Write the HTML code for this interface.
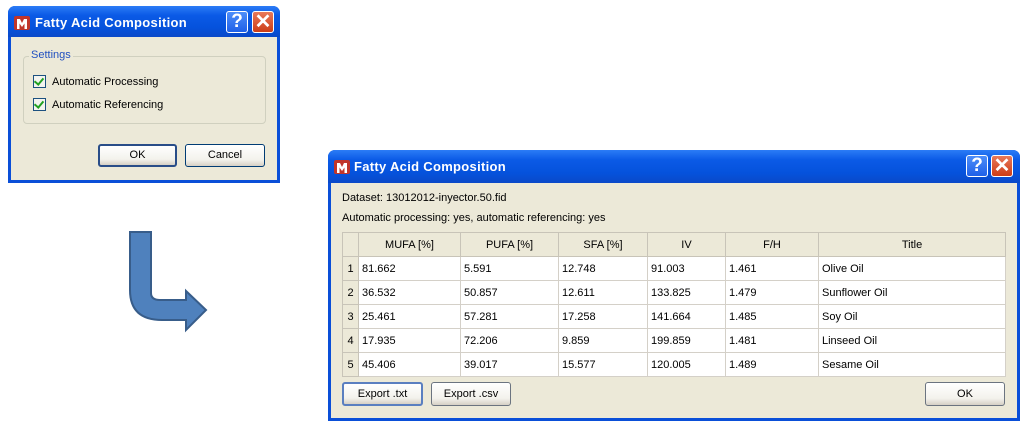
<!DOCTYPE html>
<html><head><style>
*{margin:0;padding:0;box-sizing:border-box}
body{width:1024px;height:429px;background:#fff;position:relative;overflow:hidden;font-family:"Liberation Sans",sans-serif;font-size:11px;color:#000}
.abs{position:absolute}
.win{position:absolute;background:#0a4fd8;border-radius:7px 7px 0 0}
.tb{position:absolute;left:0;right:0;top:0;background:linear-gradient(#2b7cf6,#0b5ae6 30%,#0552dc 70%,#0a49c8);border-radius:7px 7px 0 0}
.title{position:absolute;color:#fff;font-weight:bold;font-size:13px;letter-spacing:0.3px}
.body{position:absolute;background:#ece9d8}
.ico{position:absolute;width:16px;height:14px;background:#c0352a;border-radius:2px}
.ico:after{content:"";position:absolute;left:3px;top:3px;width:10px;height:10px;background:#fff;clip-path:polygon(0 100%,0 0,30% 0,50% 40%,70% 0,100% 0,100% 100%,75% 100%,75% 45%,50% 80%,25% 45%,25% 100%)}
.hb,.cb{position:absolute;width:22px;height:22px;border:1px solid #fff;border-radius:3px;color:#fff;font-weight:bold;text-align:center}
.hb{background:linear-gradient(#4d8ef9,#1f60e8);font-size:19px;line-height:20px}
.cb{background:linear-gradient(#e9795a,#cc3c16);font-size:20px;line-height:20px}
.btn{position:absolute;border:1px solid #003c74;border-radius:3px;background:linear-gradient(#fff,#f3f2ec 70%,#d6d0c5);text-align:center;font-size:11px}
.chk{position:absolute;width:13px;height:13px;border:1px solid #1c5180;background:#f4f4ef}
.chk:after{content:"";position:absolute;left:2px;top:0px;width:4px;height:7px;border:solid #21a121;border-width:0 2px 2px 0;transform:rotate(40deg)}
table{border-collapse:collapse;position:absolute;left:342px;top:232px;width:664px;font-size:11px}
td{border:1px solid #d4d0c8;height:24px;padding-left:3px;background:#fff}
tr.h td{background:#ece9d8;text-align:center;padding:0;height:24px;border-color:#c8c4b8}
td.n{background:#ece9d8;width:16px;padding:0;text-align:center;border-color:#c8c4b8}
</style></head><body>

<div class="win" style="left:8px;top:6px;width:272px;height:177px">
 <div class="tb" style="height:31px"></div>
 <div class="ico" style="left:6px;top:10px"></div>
 <div class="title" style="left:27px;top:9px">Fatty Acid Composition</div>
 <div class="hb" style="left:218px;top:5px">?</div>
 <div class="cb" style="left:244px;top:5px">✕</div>
 <div class="body" style="left:3px;top:31px;width:266px;height:143px"></div>
</div>
<div class="abs" style="left:23px;top:56px;width:243px;height:68px;border:1px solid #d0d0bf;border-radius:4px"></div>
<div class="abs" style="left:29px;top:49px;background:#ece9d8;padding:0 2px;color:#2150c0">Settings</div>
<div class="chk" style="left:33px;top:75px"></div>
<div class="abs" style="left:52px;top:76px">Automatic Processing</div>
<div class="chk" style="left:33px;top:98px"></div>
<div class="abs" style="left:52px;top:99px">Automatic Referencing</div>
<div class="btn" style="left:98px;top:144px;width:79px;height:23px;line-height:19px;border-width:2px;border-color:#294d88">OK</div>
<div class="btn" style="left:185px;top:144px;width:80px;height:23px;line-height:21px"><span style="display:block;height:21px;line-height:21px">Cancel</span></div>

<svg class="abs" style="left:0;top:0" width="1024" height="429">
 <path d="M130 232 H151 V293 Q151 300 160 300 H186 V291 L206 310 L186 330 V320 H162 Q130 320 130 290 Z" fill="#4f81bd" stroke="#385d8a" stroke-width="2"/>
</svg>

<div class="win" style="left:328px;top:150px;width:692px;height:271px">
 <div class="tb" style="height:33px"></div>
 <div class="ico" style="left:6px;top:10px"></div>
 <div class="title" style="left:26px;top:9px">Fatty Acid Composition</div>
 <div class="hb" style="left:638px;top:5px">?</div>
 <div class="cb" style="left:663px;top:5px">✕</div>
 <div class="body" style="left:3px;top:33px;width:686px;height:235px"></div>
</div>
<div class="abs" style="left:342px;top:192px">Dataset: 13012012-inyector.50.fid</div>
<div class="abs" style="left:342px;top:212px">Automatic processing: yes, automatic referencing: yes</div>
<table>
<tr class="h"><td class="n"></td><td style="width:102px">MUFA [%]</td><td style="width:98px">PUFA [%]</td><td style="width:89px">SFA [%]</td><td style="width:78px">IV</td><td style="width:93px">F/H</td><td>Title</td></tr>
<tr><td class="n">1</td><td style="border:1px dotted #777">81.662</td><td>5.591</td><td>12.748</td><td>91.003</td><td>1.461</td><td>Olive Oil</td></tr>
<tr><td class="n">2</td><td>36.532</td><td>50.857</td><td>12.611</td><td>133.825</td><td>1.479</td><td>Sunflower Oil</td></tr>
<tr><td class="n">3</td><td>25.461</td><td>57.281</td><td>17.258</td><td>141.664</td><td>1.485</td><td>Soy Oil</td></tr>
<tr><td class="n">4</td><td>17.935</td><td>72.206</td><td>9.859</td><td>199.859</td><td>1.481</td><td>Linseed Oil</td></tr>
<tr><td class="n">5</td><td>45.406</td><td>39.017</td><td>15.577</td><td>120.005</td><td>1.489</td><td>Sesame Oil</td></tr>
</table>
<div class="btn" style="left:342px;top:382px;width:81px;height:24px;line-height:20px;border-width:2px;border-color:#5a7fc0">Export .txt</div>
<div class="btn" style="left:431px;top:382px;width:80px;height:24px;line-height:22px;border-color:#6b7480">Export .csv</div>
<div class="btn" style="left:925px;top:382px;width:80px;height:24px;line-height:22px;border-color:#6b7480">OK</div>
</body></html>
